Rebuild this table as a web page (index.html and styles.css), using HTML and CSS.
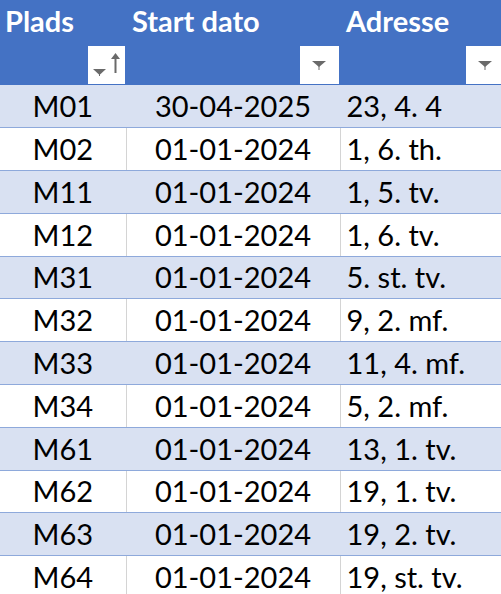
FILE: index.html
```html
<!DOCTYPE html>
<html>
<head>
<meta charset="utf-8">
<link rel="stylesheet" href="styles.css">
</head>
<body>
<table class="sheet">
  <colgroup>
    <col class="c1"><col class="c2"><col class="c3">
  </colgroup>
  <thead>
    <tr>
      <th><div class="hcell"><span class="title">Plads</span>
        <span class="filter sort">
          <svg width="37" height="38" viewBox="0 0 37 38"><path d="M5 23 h13 l-6.5 6 z" fill="#6a6a6a"/><rect x="11" y="28" width="1" height="2" fill="#6a6a6a"/><path d="M27.5 7 l-4.5 6 h3.5 v14 h2 v-14 h3.5 z" fill="#6a6a6a"/></svg>
        </span></div></th>
      <th><div class="hcell"><span class="title">Start dato</span>
        <span class="filter">
          <svg width="39" height="38" viewBox="0 0 39 38"><path d="M12 15 h14 l-7 6 z" fill="#6a6a6a"/><rect x="18.5" y="20" width="1" height="4" fill="#6a6a6a"/></svg>
        </span></div></th>
      <th><div class="hcell"><span class="title">Adresse</span>
        <span class="filter">
          <svg width="39" height="38" viewBox="0 0 39 38"><path d="M12 15 h14 l-7 6 z" fill="#6a6a6a"/><rect x="18.5" y="20" width="1" height="4" fill="#6a6a6a"/></svg>
        </span></div></th>
    </tr>
  </thead>
  <tbody>
    <tr class="band"><td>M01</td><td>30-04-2025</td><td>23, 4. 4</td></tr>
    <tr><td>M02</td><td>01-01-2024</td><td>1, 6. th.</td></tr>
    <tr class="band"><td>M11</td><td>01-01-2024</td><td>1, 5. tv.</td></tr>
    <tr><td>M12</td><td>01-01-2024</td><td>1, 6. tv.</td></tr>
    <tr class="band"><td>M31</td><td>01-01-2024</td><td>5. st. tv.</td></tr>
    <tr><td>M32</td><td>01-01-2024</td><td>9, 2. mf.</td></tr>
    <tr class="band"><td>M33</td><td>01-01-2024</td><td>11, 4. mf.</td></tr>
    <tr><td>M34</td><td>01-01-2024</td><td>5, 2. mf.</td></tr>
    <tr class="band"><td>M61</td><td>01-01-2024</td><td>13, 1. tv.</td></tr>
    <tr><td>M62</td><td>01-01-2024</td><td>19, 1. tv.</td></tr>
    <tr class="band"><td>M63</td><td>01-01-2024</td><td>19, 2. tv.</td></tr>
    <tr><td>M64</td><td>01-01-2024</td><td>19, st. tv.</td></tr>
  </tbody>
</table>
</body>
</html>
```
FILE: styles.css
```css
html, body {
  margin: 0;
  padding: 0;
  background: #ffffff;
  overflow: hidden;
}
.sheet {
  border-collapse: collapse;
  table-layout: fixed;
  width: 506px;
  font-family: Lato, "Open Sans", sans-serif;
  font-size: 29px;
  color: #000;
}
.c1 { width: 126px; }
.c2 { width: 214px; }
.c3 { width: 166px; }
thead th {
  background: #4472c4;
  color: #ffffff;
  height: 85px;
  padding: 0;
  text-align: left;
  vertical-align: top;
}
.hcell {
  height: 85px;
  display: flex;
  flex-direction: column;
  justify-content: space-between;
  align-items: flex-end;
}
.title {
  align-self: flex-start;
  font-weight: 700;
  padding: 5px 0 0 6px;
  line-height: 32px;
}
th:first-child .title { padding-left: 5px; }
.filter {
  width: 39px;
  height: 38px;
  background: #ffffff;
  margin: 0 1px 1px 0;
  display: block;
}
.filter.sort { width: 37px; }
.filter svg { display: block; }
tbody td {
  height: 42.8px;
  padding: 0 6px 6px;
  box-sizing: border-box;
  vertical-align: bottom;
  line-height: 30px;
  border-bottom: 1px solid #8ea9db;
  border-left: 1px solid #d4d4d4;
  white-space: nowrap;
}
tbody td:first-child { border-left: none; text-align: center; }
tbody td:nth-child(2) { text-align: center; }
tbody tr.band td {
  background: #d9e1f2;
  border-left-color: #d9e1f2;
}
```
